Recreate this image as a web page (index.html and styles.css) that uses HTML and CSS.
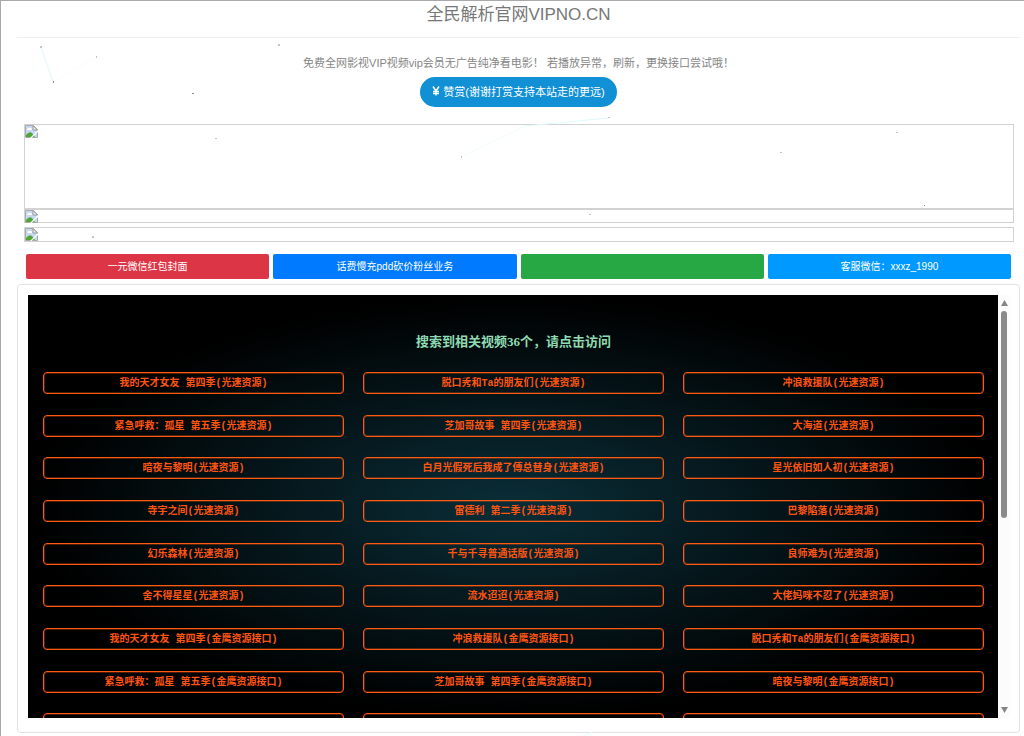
FILE: index.html
```html
<!DOCTYPE html>
<html lang="zh-CN">
<head>
<meta charset="utf-8">
<title>全民解析官网VIPNO.CN</title>
<link rel="stylesheet" href="styles.css">
</head>
<body>
<svg class="particles" width="1024" height="736" aria-hidden="true">
  <g fill="none" stroke="#dffafc">
    <path d="M41 47L53 82"/>
    <path d="M53 82L96 57" stroke="#f8fdfd"/>
    <path d="M461 157L525 126" stroke="#effbfc"/>
    <path d="M525 126L609 118"/>
    <path d="M583 736L592 732"/>
  </g>
  <g fill="#c4c4c4">
    <path d="M40 46h2v2h-2zM96 56h1v2h-1zM278 44h2v2h-2zM215 138h2v1h-2zM461 156h1v2h-1zM608 117h2v1h-2zM780 152h2v1h-2zM896 132h2v1h-2zM589 214h2v1h-2zM92 236h2v2h-2z"/>
    <path d="M53 81h1v2h-1zM192 93h2v1h-2zM924 205h1v1h-1z" fill="#888"/>
  </g>
</svg>
<svg class="symbols" aria-hidden="true">
  <symbol id="broken" viewBox="0 0 13 13">
    <path d="M.5 .5h8l4 4v8H.5z" fill="#c6d8f5" stroke="#aaa"/>
    <path d="M2 5q0-2 2-2 2-1 3 1v1z" fill="#fff"/>
    <path d="M1 12V10q3-4 6-2l3 4z" fill="#50a633"/>
    <path d="M8 .5v4.500h4.500z" fill="#eee" stroke="#999"/>
    <path d="M13 5v2L6.500 13H5z" fill="#fff"/>
  </symbol>
</svg>
<main class="page">
  <h1 class="title">全民解析官网VIPNO.CN</h1>
  <section class="intro">
    <p class="notice">免费全网影视VIP视频vip会员无广告纯净看电影！ 若播放异常，刷新，更换接口尝试哦！</p>
    <button class="donate" type="button"><svg class="yen" viewBox="0 0 8 10" aria-hidden="true"><path d="M1 .5L4 5L7 .5M4 5V9.500M1 5.500H7M1 7.500H7"/></svg>赞赏(谢谢打赏支持本站走的更远)</button>
  </section>
  <section class="banners">
    <div class="banner banner-large"><svg class="broken"><use href="#broken"/></svg></div>
    <div class="banner"><svg class="broken"><use href="#broken"/></svg></div>
    <div class="banner banner-apart"><svg class="broken"><use href="#broken"/></svg></div>
  </section>
  <nav class="actions">
    <a class="action red" href="#">一元微信红包封面</a>
    <a class="action blue" href="#">话费慢充pdd砍价粉丝业务</a>
    <a class="action green" href="#"></a>
    <a class="action sky" href="#">客服微信：xxxz_1990</a>
  </nav>
  <section class="card">
    <div class="results">
      <h2 class="results-title">搜索到相关视频36个，请点击访问</h2>
      <div class="grid">
        <a class="item" href="#">我的天才女友 第四季(光速资源)</a>
        <a class="item" href="#">脱口秀和Ta的朋友们(光速资源)</a>
        <a class="item" href="#">冲浪救援队(光速资源)</a>
        <a class="item" href="#">紧急呼救：孤星 第五季(光速资源)</a>
        <a class="item" href="#">芝加哥故事 第四季(光速资源)</a>
        <a class="item" href="#">大海道(光速资源)</a>
        <a class="item" href="#">暗夜与黎明(光速资源)</a>
        <a class="item" href="#">白月光假死后我成了傅总替身(光速资源)</a>
        <a class="item" href="#">星光依旧如人初(光速资源)</a>
        <a class="item" href="#">寺宇之间(光速资源)</a>
        <a class="item" href="#">雷德利 第二季(光速资源)</a>
        <a class="item" href="#">巴黎陷落(光速资源)</a>
        <a class="item" href="#">幻乐森林(光速资源)</a>
        <a class="item" href="#">千与千寻普通话版(光速资源)</a>
        <a class="item" href="#">良师难为(光速资源)</a>
        <a class="item" href="#">舍不得星星(光速资源)</a>
        <a class="item" href="#">流水迢迢(光速资源)</a>
        <a class="item" href="#">大佬妈咪不忍了(光速资源)</a>
        <a class="item" href="#">我的天才女友 第四季(金鹰资源接口)</a>
        <a class="item" href="#">冲浪救援队(金鹰资源接口)</a>
        <a class="item" href="#">脱口秀和Ta的朋友们(金鹰资源接口)</a>
        <a class="item" href="#">紧急呼救：孤星 第五季(金鹰资源接口)</a>
        <a class="item" href="#">芝加哥故事 第四季(金鹰资源接口)</a>
        <a class="item" href="#">暗夜与黎明(金鹰资源接口)</a>
        <a class="item" href="#"></a>
        <a class="item" href="#"></a>
        <a class="item" href="#"></a>
      </div>
    </div>
    <div class="scrollbar" aria-hidden="true">
      <svg class="arrow" viewBox="0 0 7 6"><path d="M3.500 0L7 6H0z"/></svg>
      <div class="track"><div class="thumb"></div></div>
      <svg class="arrow" viewBox="0 0 7 6"><path d="M3.500 6L7 0H0z"/></svg>
    </div>
  </section>
</main>
</body>
</html>
```
FILE: styles.css
```css
* {
  box-sizing: border-box;
}

body {
  margin: 0;
  min-height: 100vh;
  border-top: 1px solid #a9a9a9;
  border-left: 1px solid #a9a9a9;
  background: #fff;
  font-family: "Liberation Sans", "Noto Sans CJK SC", sans-serif;
}

a {
  text-decoration: none;
}

.particles {
  position: absolute;
  top: 0;
  left: 0;
  pointer-events: none;
}

.symbols {
  display: none;
}

.page {
  padding: 0 4px 0 16px;
}

.title {
  margin: 0;
  padding-bottom: 9px;
  border-bottom: 1px solid #eee;
  color: #777;
  font-size: 17px;
  font-weight: 400;
  line-height: 27px;
  text-align: center;
}

.intro {
  display: flex;
  flex-direction: column;
  align-items: center;
  gap: 6px;
  padding: 17px 0;
}

.notice {
  margin: 0;
  color: #858585;
  font-size: 11px;
  line-height: 16px;
}

.donate {
  display: flex;
  align-items: center;
  gap: 3px;
  height: 30px;
  padding: 0 12px 2px;
  border: 0;
  border-radius: 15px;
  background: #1190d5;
  color: #fff;
  font-family: inherit;
  font-size: 11px;
}

.yen {
  width: 8px;
  height: 10px;
  fill: none;
  stroke: #fff;
  stroke-width: 1.4;
}

.banners {
  padding: 0 6px 0 7px;
}

.banner {
  display: flex;
  height: 14px;
  border: 1px solid #d2d2d2;
}

.banner-large {
  height: 85px;
}

.banner-apart {
  height: 15px;
  margin-top: 4px;
}

.broken {
  width: 13px;
  height: 13px;
}

.actions {
  display: grid;
  grid-template-columns: repeat(4, 1fr);
  gap: 4px;
  padding: 12px 9px 5px;
}

.action {
  height: 25px;
  border-radius: 2px;
  color: #fff;
  font-size: 10px;
  line-height: 25px;
  text-align: center;
}

.red {
  background: #dc3545;
}

.blue {
  background: #007bff;
}

.green {
  background: #28a745;
}

.sky {
  background: #0099ff;
}

.card {
  display: flex;
  padding: 10px 9px 14px 10px;
  border: 1px solid #e2e2e2;
  border-radius: 4px;
}

.results {
  flex: 1;
  height: 423px;
  padding: 37px 14px 0 15px;
  overflow: hidden;
  background: radial-gradient(ellipse at center, #0a2e38 0%, #000 70%);
}

.results-title {
  margin: 0 0 20px;
  color: #8fdcb4;
  font-family: "Liberation Serif", "Noto Sans CJK SC", serif;
  font-size: 13px;
  font-weight: 700;
  line-height: 20px;
  text-align: center;
}

.grid {
  display: grid;
  grid-template-columns: repeat(3, 1fr);
  grid-template-rows: repeat(9, 1fr);
  column-gap: 19px;
  align-items: start;
  height: 384px;
}

.item {
  height: 22px;
  padding-top: 1px;
  border: 1px solid #ff5a12;
  border-radius: 4px;
  box-shadow: inset 0 0 0 1px rgba(255, 90, 18, 0.3);
  color: #ff5511;
  font-family: "Liberation Mono", "Noto Sans CJK SC", monospace;
  font-size: 10px;
  font-weight: 700;
  line-height: 19px;
  text-align: center;
}

.scrollbar {
  display: flex;
  flex-direction: column;
  align-items: center;
  width: 12px;
  padding: 5px 0;
  background: #fcfcfc;
}

.arrow {
  width: 7px;
  height: 6px;
  fill: #858585;
}

.track {
  flex: 1;
  padding: 5px 0;
}

.thumb {
  width: 6px;
  height: 207px;
  border-radius: 3px;
  background: #8b8b8b;
}
```
